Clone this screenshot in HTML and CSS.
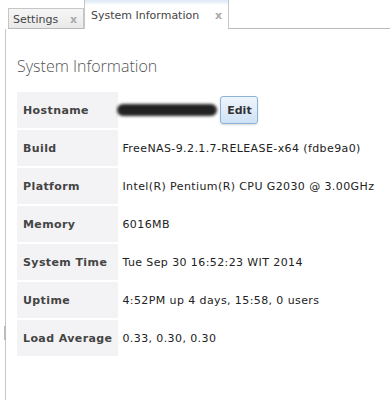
FILE: index.html
```html
<!DOCTYPE html>
<html lang="en">
<head>
    <meta charset="UTF-8">
    <title>System Information</title>
    <link rel="stylesheet" href="styles.css">
</head>
<body>
    <div class="tabbar">
        <div class="tab">Settings <span class="close">x</span></div>
        <div class="tab active">System Information <span class="close">x</span></div>
        <div class="tab-rest"></div>
    </div>

    <div class="panel">
        <h1>System Information</h1>
        <table class="info">
            <tr>
                <th>Hostname</th>
                <td><span class="hidden-name"></span><button class="btn-edit">Edit</button></td>
            </tr>
            <tr><th>Build</th><td>FreeNAS-9.2.1.7-RELEASE-x64 (fdbe9a0)</td></tr>
            <tr><th>Platform</th><td>Intel(R) Pentium(R) CPU G2030 @ 3.00GHz</td></tr>
            <tr><th>Memory</th><td>6016MB</td></tr>
            <tr><th>System Time</th><td>Tue Sep 30 16:52:23 WIT 2014</td></tr>
            <tr><th>Uptime</th><td>4:52PM up 4 days, 15:58, 0 users</td></tr>
            <tr><th>Load Average</th><td>0.33, 0.30, 0.30</td></tr>
        </table>
        <div class="grip"></div>
    </div>
</body>
</html>
```
FILE: styles.css
```css
body {
    margin: 0;
    background-color: white;
    font-family: "DejaVu Sans", Verdana, sans-serif;
    color: #333;
    height: 400px;
    overflow: hidden;
}

/* tabs */
.tabbar {
    display: flex;
    align-items: flex-end;
    height: 29px;
    padding-left: 8px;
}

.tab {
    font-size: 11px;
    color: #444;
    height: 21px;
    line-height: 21px;
    padding: 0 6px 0 4px;
    border: 1px solid #c6c6c6;
    border-bottom: 1px solid #b9b9b9;
    background: linear-gradient(#f6f6f6, #e9e9e9);
    box-sizing: border-box;
    width: 76px;
    display: flex;
    justify-content: space-between;
}

.tab.active {
    height: 29px;
    line-height: 27px;
    width: 145px;
    padding: 2px 6px 0 6px;
    background: linear-gradient(#dde9f6 0, #eef4fb 3px, white 5px);
    border: 1px solid #c6c6c6;
    border-top: none;
    border-bottom: none;
}

.close {
    color: #aaa;
    font-weight: bold;
    font-size: 11px;
}

.tab-rest {
    flex: 1;
    border-bottom: 1px solid #b9b9b9;
}

/* panel */
.panel {
    margin-left: 5px;
    border-left: 1px solid #c6c6c6;
    height: 371px;
    padding-left: 11px;
    position: relative;
}

h1 {
    font-family: "Open Sans", "Liberation Sans", sans-serif;
    font-weight: 300;
    font-size: 16px;
    color: #555;
    margin: 0;
    padding-top: 26px;
    line-height: 22px;
}

.info {
    border-collapse: separate;
    border-spacing: 0 2px;
    margin-top: 13px;
    font-size: 11px;
    letter-spacing: 0.4px;
}

.info th {
    background-color: #f3f3f5;
    text-align: left;
    font-weight: bold;
    color: #444;
    height: 36px;
    padding: 0 6px;
    white-space: nowrap;
}

.info td {
    padding: 0 4px;
    color: #222;
    white-space: nowrap;
}

.hidden-name {
    display: inline-block;
    width: 100px;
    height: 12px;
    background-color: #222;
    border-radius: 6px;
    filter: blur(1.5px);
    vertical-align: middle;
    margin-left: -5px;
}

.btn-edit {
    font-family: "DejaVu Sans", Verdana, sans-serif;
    font-size: 11px;
    font-weight: bold;
    color: #333;
    height: 28px;
    width: 38px;
    padding: 0;
    margin-left: 3px;
    border: 1px solid #8db2d8;
    border-radius: 3px;
    background: linear-gradient(#eef5fc, #cfe2f6);
    box-shadow: 0 1px 2px rgba(0, 0, 0, 0.15);
    vertical-align: middle;
}

.grip {
    position: absolute;
    left: -2px;
    top: 297px;
    width: 2px;
    height: 14px;
    background-color: #bbb;
}
```
